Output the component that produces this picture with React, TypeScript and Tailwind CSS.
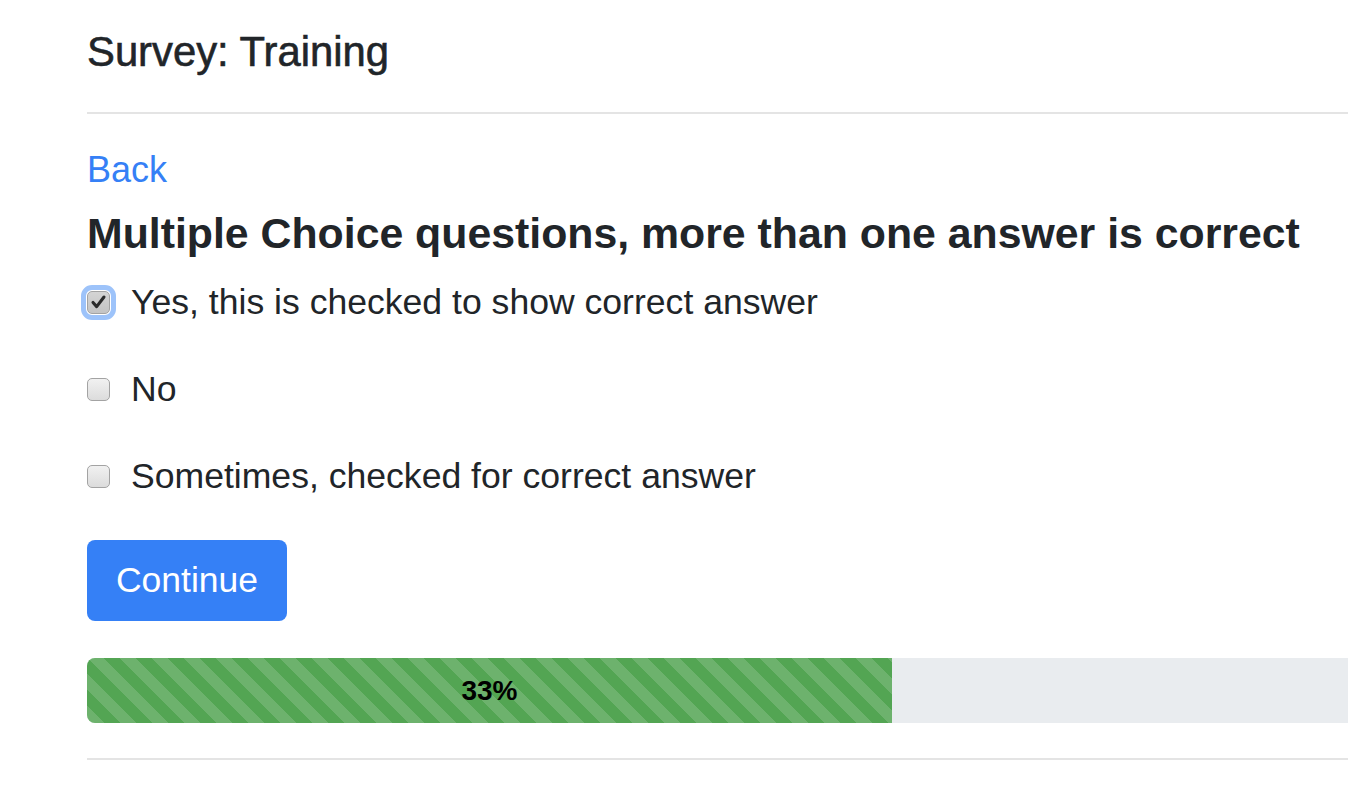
import React from 'react';

const options = [
  { label: 'Yes, this is checked to show correct answer', checked: true },
  { label: 'No', checked: false },
  { label: 'Sometimes, checked for correct answer', checked: false },
];

const CheckBox = ({ checked }: { checked: boolean }) => (
  <span
    className={`relative flex h-[23px] w-[23px] shrink-0 items-center justify-center rounded-[5px] border border-[#a3a3a3] bg-gradient-to-b ${
      checked
        ? 'from-[#d4d4d4] to-[#c4c4c4] outline-[5px] outline-offset-[1px] outline-[#9dc3fa] outline-solid'
        : 'from-[#f1f1f1] to-[#dcdcdc]'
    }`}
  >
    {checked && (
      <svg viewBox="0 0 23 23" className="h-[23px] w-[23px]">
        <path
          d="M5.5 11.5 L9.5 16 L17.5 5.5"
          fill="none"
          stroke="#2b2b2b"
          strokeWidth="3.4"
          strokeLinecap="round"
          strokeLinejoin="round"
        />
      </svg>
    )}
  </span>
);

const App = () => {
  return (
    <div className="min-h-[806px] w-full overflow-hidden bg-white font-['Liberation_Sans',Arial,sans-serif] text-[#212529]">
      <div className="pl-[87px]">
        <h3 className="mt-[27px] text-[41.8px] leading-[50px] [-webkit-text-stroke:0.6px_#212529]">
          Survey: Training
        </h3>

        <hr className="mt-[35px] border-t-2 border-[#e4e4e4]" />

        <a href="#" className="mt-[31px] block w-fit text-[36px] leading-[50px] text-[#3580f6]">
          Back
        </a>

        <h4 className="mt-[12px] whitespace-nowrap text-[42.8px] font-bold leading-[52px]">
          Multiple Choice questions, more than one answer is correct
        </h4>

        <div className="mt-[17px] flex flex-col gap-[34px]">
          {options.map((option, index) => (
            <label key={index} className="flex h-[53px] items-center gap-[21px]">
              <CheckBox checked={option.checked} />
              <span className="whitespace-nowrap text-[35.6px] leading-[53px]">{option.label}</span>
            </label>
          ))}
        </div>

        <button className="mt-[37px] flex h-[81px] w-[200px] items-center justify-center rounded-[8px] bg-[#3580f6] text-[35.5px] text-white">
          Continue
        </button>

        <div className="mt-[37px] flex h-[65px] overflow-hidden rounded-l-[8px] bg-[#e9ecef]">
          <div className="flex w-[805px] items-center justify-center bg-[#53a553] bg-[linear-gradient(45deg,rgba(255,255,255,0.15)_25%,transparent_25%,transparent_50%,rgba(255,255,255,0.15)_50%,rgba(255,255,255,0.15)_75%,transparent_75%,transparent)] bg-size-[32px_32px] text-[28px] font-bold text-black">
            33%
          </div>
        </div>

        <hr className="mt-[35px] border-t-2 border-[#e4e4e4]" />
      </div>
    </div>
  );
};

export default App;
